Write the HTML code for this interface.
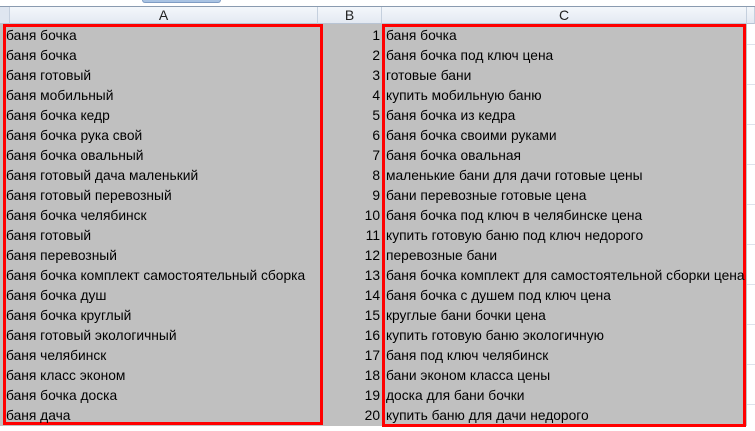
<!DOCTYPE html>
<html><head><meta charset="utf-8"><style>
*{margin:0;padding:0;box-sizing:border-box}
body{width:755px;height:431px;overflow:hidden;background:#fff;position:relative;font-family:"Liberation Sans","DejaVu Sans",sans-serif;font-size:13.8px;color:#000}
.top{position:absolute;left:0;top:0;width:755px;height:7px;background:#fff;border-bottom:1px solid #8a9bb0}
.tab{position:absolute;left:142px;top:0;width:79px;height:3px;background:#a9c3e3;border:1px solid #7f9cc4;border-top:none;border-radius:0 0 4px 4px}
.hdr{position:absolute;top:7px;height:17px;background:linear-gradient(#f4f7fb,#e3e9f2);border-right:1px solid #c5d0de;border-bottom:1px solid #b8c4d4;text-align:center;font-size:14px;line-height:17px;color:#222}
.gray{position:absolute;left:0;top:24px;width:747px;height:402px;background:#c0c0c0}
.row{position:absolute;height:20px;line-height:20px;white-space:nowrap;margin-top:1px}
.box{position:absolute;border:3px solid #f00}
.grid{position:absolute;left:747px;width:8px;height:1px;background:#dde3ec}
.n{left:330px;width:50px;text-align:right}
</style></head><body>
<div class="top"><div class="tab"></div></div>
<div class="hdr" style="left:0;width:10px;background:#dfe6f0"></div>
<div class="hdr" style="left:10px;width:308px">A</div>
<div class="hdr" style="left:318px;width:64px">B</div>
<div class="hdr" style="left:382px;width:365px">C</div>
<div class="hdr" style="left:747px;width:8px"></div>
<div class="gray"></div>
<div class="box" style="left:3px;top:24px;width:320px;height:401px"></div>
<div class="box" style="left:382px;top:24px;width:364px;height:403px"></div>
<div class="row" style="left:6px;top:25px">баня бочка</div>
<div class="row" style="left:6px;top:45px">баня бочка</div>
<div class="row" style="left:6px;top:65px">баня готовый</div>
<div class="row" style="left:6px;top:85px">баня мобильный</div>
<div class="row" style="left:6px;top:105px">баня бочка кедр</div>
<div class="row" style="left:6px;top:125px">баня бочка рука свой</div>
<div class="row" style="left:6px;top:145px">баня бочка овальный</div>
<div class="row" style="left:6px;top:165px">баня готовый дача маленький</div>
<div class="row" style="left:6px;top:185px">баня готовый перевозный</div>
<div class="row" style="left:6px;top:205px">баня бочка челябинск</div>
<div class="row" style="left:6px;top:225px">баня готовый</div>
<div class="row" style="left:6px;top:245px">баня перевозный</div>
<div class="row" style="left:6px;top:265px">баня бочка комплект самостоятельный сборка</div>
<div class="row" style="left:6px;top:285px">баня бочка душ</div>
<div class="row" style="left:6px;top:305px">баня бочка круглый</div>
<div class="row" style="left:6px;top:325px">баня готовый экологичный</div>
<div class="row" style="left:6px;top:345px">баня челябинск</div>
<div class="row" style="left:6px;top:365px">баня класс эконом</div>
<div class="row" style="left:6px;top:385px">баня бочка доска</div>
<div class="row" style="left:6px;top:405px">баня дача</div>

<div class="row n" style="top:25px">1</div>
<div class="row n" style="top:45px">2</div>
<div class="row n" style="top:65px">3</div>
<div class="row n" style="top:85px">4</div>
<div class="row n" style="top:105px">5</div>
<div class="row n" style="top:125px">6</div>
<div class="row n" style="top:145px">7</div>
<div class="row n" style="top:165px">8</div>
<div class="row n" style="top:185px">9</div>
<div class="row n" style="top:205px">10</div>
<div class="row n" style="top:225px">11</div>
<div class="row n" style="top:245px">12</div>
<div class="row n" style="top:265px">13</div>
<div class="row n" style="top:285px">14</div>
<div class="row n" style="top:305px">15</div>
<div class="row n" style="top:325px">16</div>
<div class="row n" style="top:345px">17</div>
<div class="row n" style="top:365px">18</div>
<div class="row n" style="top:385px">19</div>
<div class="row n" style="top:405px">20</div>

<div class="row" style="left:386px;top:25px">баня бочка</div>
<div class="row" style="left:386px;top:45px">баня бочка под ключ цена</div>
<div class="row" style="left:386px;top:65px">готовые бани</div>
<div class="row" style="left:386px;top:85px">купить мобильную баню</div>
<div class="row" style="left:386px;top:105px">баня бочка из кедра</div>
<div class="row" style="left:386px;top:125px">баня бочка своими руками</div>
<div class="row" style="left:386px;top:145px">баня бочка овальная</div>
<div class="row" style="left:386px;top:165px">маленькие бани для дачи готовые цены</div>
<div class="row" style="left:386px;top:185px">бани перевозные готовые цена</div>
<div class="row" style="left:386px;top:205px">баня бочка под ключ в челябинске цена</div>
<div class="row" style="left:386px;top:225px">купить готовую баню под ключ недорого</div>
<div class="row" style="left:386px;top:245px">перевозные бани</div>
<div class="row" style="left:386px;top:265px">баня бочка комплект для самостоятельной сборки цена</div>
<div class="row" style="left:386px;top:285px">баня бочка с душем под ключ цена</div>
<div class="row" style="left:386px;top:305px">круглые бани бочки цена</div>
<div class="row" style="left:386px;top:325px">купить готовую баню экологичную</div>
<div class="row" style="left:386px;top:345px">баня под ключ челябинск</div>
<div class="row" style="left:386px;top:365px">бани эконом класса цены</div>
<div class="row" style="left:386px;top:385px">доска для бани бочки</div>
<div class="row" style="left:386px;top:405px">купить баню для дачи недорого</div>

<div class="grid" style="top:44px"></div><div class="grid" style="top:84px"></div><div class="grid" style="top:124px"></div><div class="grid" style="top:164px"></div><div class="grid" style="top:204px"></div><div class="grid" style="top:244px"></div><div class="grid" style="top:284px"></div><div class="grid" style="top:324px"></div><div class="grid" style="top:364px"></div><div class="grid" style="top:404px"></div>
</body></html>
